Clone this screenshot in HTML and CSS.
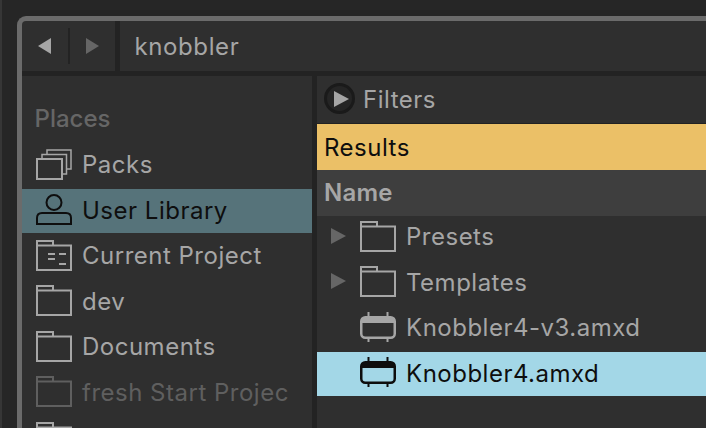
FILE: index.html
```html
<!DOCTYPE html>
<html>

<head>
    <meta charset="utf-8">
    <title>Browser</title>
    <link rel="stylesheet" href="styles.css">
</head>

<body>
    <svg class="defs" width="0" height="0">
        <symbol id="folder" viewBox="0 0 36 32">
            <path d="M1 30V1H17V5.500H35V30Z M1 5.500H17" fill="none" stroke="currentColor" stroke-width="2" />
        </symbol>
        <symbol id="device" viewBox="0 0 36 32">
            <path d="M8.500 0V6 M27.500 0V6 M8.500 26V30 M27.500 26V30" fill="none" stroke="currentColor" stroke-width="2" />
            <rect x="1.250" y="5.250" width="33.500" height="20.500" rx="4" fill="none" stroke="currentColor" stroke-width="2.500" />
            <path d="M1 11V9C1 6 3 5 5 5H31C33 5 35 6 35 9V11Z" fill="currentColor" />
        </symbol>
    </svg>

    <div class="window">
        <div class="toolbar">
            <div class="nav">
                <span class="arrow-left"></span>
                <span class="nav-sep"></span>
                <span class="arrow-right"></span>
            </div>
            <div class="search">knobbler</div>
        </div>

        <div class="panes">
            <div class="sidebar">
                <div class="places">Places</div>
                <div class="row">
                    <svg class="icon" viewBox="0 0 36 32">
                        <path d="M1 10H26V30H1Z" fill="none" stroke="currentColor" stroke-width="2" />
                        <path d="M6 10V5.500H30.500V25H26 M11 5.500V1H35V20H30.500" fill="none" stroke="currentColor" stroke-width="1.500" />
                    </svg>
                    Packs
                </div>
                <div class="row selected-place">
                    <svg class="icon" viewBox="0 0 36 32">
                        <circle cx="18" cy="8.500" r="7.500" fill="none" stroke="currentColor" stroke-width="2" />
                        <path d="M1 30V24C1 21 3 19 6 19H30C33 19 35 21 35 24V30Z" fill="none" stroke="currentColor" stroke-width="2" />
                    </svg>
                    User Library
                </div>
                <div class="row">
                    <svg class="icon" viewBox="0 0 36 32">
                        <path d="M1 30V1H17V5.500H35V30Z M1 5.500H17" fill="none" stroke="currentColor" stroke-width="2" />
                        <path d="M12 14H19 M23 14H30 M12 19H19 M23 24H30" fill="none" stroke="currentColor" stroke-width="2" />
                    </svg>
                    Current Project
                </div>
                <div class="row">
                    <svg class="icon"><use href="#folder" /></svg>
                    dev
                </div>
                <div class="row">
                    <svg class="icon"><use href="#folder" /></svg>
                    Documents
                </div>
                <div class="row dim">
                    <svg class="icon"><use href="#folder" /></svg>
                    fresh Start Projec
                </div>
                <div class="row">
                    <svg class="icon"><use href="#folder" /></svg>
                </div>
            </div>

            <div class="content">
                <div class="filters">
                    <span class="play"><span class="play-arrow"></span></span>
                    Filters
                </div>
                <div class="results">Results</div>
                <div class="name-head">Name</div>
                <div class="file">
                    <span class="expand"></span>
                    <svg class="icon"><use href="#folder" /></svg>
                    Presets
                </div>
                <div class="file">
                    <span class="expand"></span>
                    <svg class="icon"><use href="#folder" /></svg>
                    Templates
                </div>
                <div class="file">
                    <span class="expand blank"></span>
                    <svg class="icon"><use href="#device" /></svg>
                    Knobbler4-v3.amxd
                </div>
                <div class="file selected-file">
                    <span class="expand blank"></span>
                    <svg class="icon"><use href="#device" /></svg>
                    Knobbler4.amxd
                </div>
            </div>
        </div>
    </div>
</body>

</html>
```

FILE: styles.css
```css
html, body {
    margin: 0;
    height: 100%;
}

body {
    width: 706px;
    height: 428px;
    overflow: hidden;
    box-sizing: border-box;
    padding: 16px 0 0 15px;
    border-left: 2px solid #363636;
    background-color: #262626;
    font-family: Inter, "Liberation Sans", sans-serif;
    font-size: 24px;
    letter-spacing: 0.500px;
    color: #a6a6a6;
}

.defs {
    display: block;
    height: 0;
}

.window {
    height: 420px;
    border-top: 5px solid #6b6b6b;
    border-left: 5px solid #6b6b6b;
    border-top-left-radius: 9px;
    background-color: #2f2f2f;
}

.toolbar {
    display: flex;
    height: 50px;
    border-bottom: 5px solid #232323;
}

.nav {
    display: flex;
    align-items: center;
    width: 98px;
    padding-left: 16px;
    box-sizing: border-box;
    border-right: 5px solid #232323;
    flex-shrink: 0;
}

.arrow-left {
    border-style: solid;
    border-width: 8.500px 13px 8.500px 0;
    border-color: transparent #a6a6a6 transparent transparent;
}

.nav-sep {
    width: 2px;
    height: 36px;
    margin: 0 16px 0 17px;
    background-color: #232323;
}

.arrow-right {
    border-style: solid;
    border-width: 8.500px 0 8.500px 13px;
    border-color: transparent transparent transparent #666666;
}

.search {
    display: flex;
    align-items: center;
    padding-left: 14.500px;
    letter-spacing: 0.600px;
}

.panes {
    display: flex;
}

.sidebar {
    width: 290px;
    height: 352px;
    flex-shrink: 0;
    overflow: hidden;
    border-right: 5px solid #232323;
}

.places {
    height: 43.500px;
    padding: 24px 0 0 12.500px;
    line-height: 38px;
    letter-spacing: 0;
    color: #666666;
    font-weight: 500;
}

.row {
    display: flex;
    align-items: center;
    box-sizing: border-box;
    height: 43.500px;
    margin-bottom: 2px;
    padding: 0 0 1px 14px;
    gap: 10px;
}

.icon {
    width: 36px;
    height: 32px;
    flex-shrink: 0;
}

.selected-place {
    background-color: #56737a;
    color: #0e0e0e;
}

.dim {
    color: #5f5f5f;
}

.content {
    flex: 1;
}

.filters {
    display: flex;
    align-items: center;
    height: 47px;
    padding-left: 7px;
    gap: 8px;
    border-bottom: 1px solid #222222;
}

.play {
    display: flex;
    align-items: center;
    justify-content: center;
    box-sizing: border-box;
    width: 31px;
    height: 31px;
    margin-bottom: 2px;
    border-radius: 50%;
    border: 3px solid #1a1a1a;
    background-color: #252525;
}

.play-arrow {
    margin-left: 3px;
    border-style: solid;
    border-width: 8px 0 8px 15px;
    border-color: transparent transparent transparent #a6a6a6;
}

.results {
    display: flex;
    align-items: center;
    height: 46px;
    padding-left: 7px;
    background-color: #ebc067;
    color: #0e0e0e;
}

.name-head {
    display: flex;
    align-items: center;
    height: 45.500px;
    padding-left: 7px;
    background-color: #3e3e3e;
    font-weight: 600;
    letter-spacing: 0.200px;
}

.file {
    display: flex;
    align-items: center;
    box-sizing: border-box;
    height: 43.500px;
    margin-bottom: 2px;
    padding: 0 0 1px 14px;
}

.expand {
    width: 0;
    height: 0;
    margin: -2px 14px 0 0;
    border-style: solid;
    border-width: 8px 0 8px 15px;
    border-color: transparent transparent transparent #666666;
}

.expand.blank {
    border-color: transparent;
}

.file .icon {
    margin-right: 10px;
}

.selected-file {
    background-color: #a3d7e7;
    color: #0e0e0e;
}
```
